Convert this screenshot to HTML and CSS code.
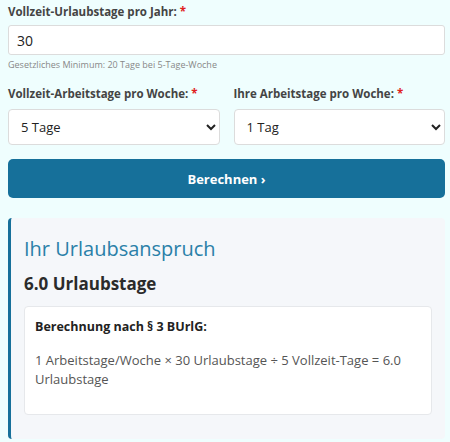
FILE: index.html
```html
<!DOCTYPE html>
<html lang="de">
<head>
<meta charset="utf-8">
<link rel="stylesheet" href="styles.css">
</head>
<body>
<div class="calc">
  <div class="field">
    <label class="label">Vollzeit-Urlaubstage pro Jahr: <span class="req">*</span></label>
    <input class="input" type="text" value="30">
    <div class="hint">Gesetzliches Minimum: 20 Tage bei 5-Tage-Woche</div>
  </div>
  <div class="row">
    <div class="col">
      <label class="label">Vollzeit-Arbeitstage pro Woche: <span class="req">*</span></label>
      <select class="select"><option>5 Tage</option></select>
    </div>
    <div class="col">
      <label class="label">Ihre Arbeitstage pro Woche: <span class="req">*</span></label>
      <select class="select"><option>1 Tag</option></select>
    </div>
  </div>
  <button class="btn">Berechnen ›</button>
  <div class="result">
    <h2 class="result-title">Ihr Urlaubsanspruch</h2>
    <div class="result-value">6.0 Urlaubstage</div>
    <div class="detail">
      <div class="detail-title">Berechnung nach § 3 BUrlG:</div>
      <p class="detail-text">1 Arbeitstage/Woche × 30 Urlaubstage ÷ 5 Vollzeit-Tage = 6.0 Urlaubstage</p>
    </div>
  </div>
</div>
</body>
</html>
```

FILE: styles.css
```css
html, body {
  margin: 0;
  padding: 0;
  background: #effefe;
}
body {
  font-family: "Open Sans", "DejaVu Sans", sans-serif;
  color: #333;
}
.calc {
  margin-left: 8px;
  width: 437px;
  padding-top: 4px;
}
.label {
  display: block;
  font-weight: 700;
  font-size: 11.5px;
  line-height: 16px;
  color: #444;
  margin-bottom: 5px;
}
.req {
  color: #e02020;
}
.input {
  display: block;
  box-sizing: border-box;
  width: 100%;
  height: 30px;
  border: 1px solid #dcdcdc;
  border-radius: 3px;
  background: #fff;
  padding: 0 8px;
  font-family: inherit;
  font-size: 14px;
  color: #222;
}
.hint {
  font-size: 9px;
  color: #888;
  margin-top: 4px;
  line-height: 12px;
}
.row {
  display: flex;
  gap: 14px;
  margin-top: 15px;
}
.col {
  flex: 1;
  min-width: 0;
}
.col .label {
  margin-bottom: 7px;
}
.select {
  display: block;
  box-sizing: border-box;
  width: 100%;
  height: 36px;
  border: 1px solid #dcdcdc;
  border-radius: 4px;
  background: #fff;
  padding: 0 8px;
  font-family: inherit;
  font-size: 13px;
  color: #222;
}
.btn {
  display: block;
  width: 100%;
  height: 39px;
  margin-top: 14px;
  border: none;
  border-radius: 5px;
  background: #16709a;
  color: #fff;
  font-family: inherit;
  font-weight: 700;
  font-size: 13px;
}
.result {
  margin-top: 20px;
  background: #f5f7fa;
  border-left: 3px solid #17709a;
  border-radius: 4px;
  padding: 17px 13px 24px 13px;
}
.result-title {
  margin: 0;
  font-weight: 400;
  font-size: 20px;
  line-height: 28px;
  color: #2a80a8;
}
.result-value {
  margin-top: 10px;
  font-weight: 700;
  font-size: 17px;
  line-height: 22px;
  color: #2b2b2b;
}
.detail {
  margin-top: 11px;
  background: #fff;
  border: 1px solid #e6e8eb;
  border-radius: 4px;
  padding: 11px 10px 25px 10px;
}
.detail-title {
  font-weight: 700;
  font-size: 12.5px;
  line-height: 18px;
  color: #222;
}
.detail-text {
  margin: 15px 0 0 0;
  font-size: 13px;
  line-height: 19px;
  color: #555;
}
```
